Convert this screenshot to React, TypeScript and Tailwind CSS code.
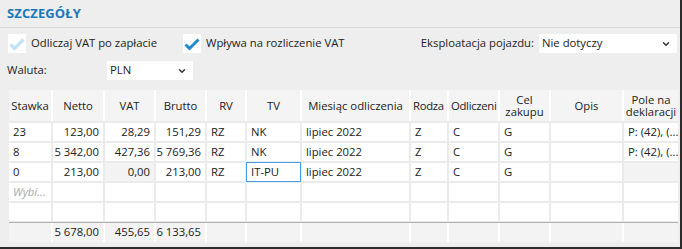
import { ChevronDown } from "lucide-react"

type Row = {
  stawka: string
  netto: string
  vat: string
  brutto: string
  rv: string
  tv: string
  miesiac: string
  rodzaj: string
  odl: string
  cel: string
  pole: string
}

const rows: Row[] = [
  { stawka: "23", netto: "123,00", vat: "28,29", brutto: "151,29", rv: "RZ", tv: "NK", miesiac: "lipiec 2022", rodzaj: "Z", odl: "C", cel: "G", pole: "P: (42), (..." },
  { stawka: "8", netto: "5 342,00", vat: "427,36", brutto: "5 769,36", rv: "RZ", tv: "NK", miesiac: "lipiec 2022", rodzaj: "Z", odl: "C", cel: "G", pole: "P: (42), (..." },
  { stawka: "0", netto: "213,00", vat: "0,00", brutto: "213,00", rv: "RZ", tv: "IT-PU", miesiac: "lipiec 2022", rodzaj: "Z", odl: "C", cel: "G", pole: "" },
]

const cols = "grid grid-cols-[42px_50px_49px_49px_38px_53px_107px_36px_49px_49px_71px_54px] gap-x-[2px]"

function CheckIcon({ faded }: { faded?: boolean }) {
  return (
    <svg width="16" height="14" viewBox="0 0 16 14">
      {faded ? (
        <path d="M1.5 7.5 L5.5 11.5 L14.5 2.5" fill="none" stroke="#c3e2f3" strokeWidth="3.2" strokeLinejoin="round" />
      ) : (
        <path d="M1.5 7.5 L5.5 11.5 L14.5 2.5" fill="none" stroke="#1e8ad6" strokeWidth="3" />
      )}
    </svg>
  )
}

function Select({ value, className }: { value: string; className: string }) {
  return (
    <div className={`h-[19px] bg-white flex items-center justify-between pl-[3px] pr-[6px] ${className}`}>
      <span>{value}</span>
      <ChevronDown size={10} strokeWidth={3.5} color="#333" />
    </div>
  )
}

function Cell({ children, align = "left", gray, focused }: { children?: React.ReactNode; align?: "left" | "right"; gray?: boolean; focused?: boolean }) {
  return (
    <div
      className={`h-[18px] flex items-center px-[4px] whitespace-nowrap overflow-hidden ${align === "right" ? "justify-end" : ""} ${gray ? "bg-[#f3f3f3]" : "bg-white"} ${focused ? "outline outline-1 outline-[#4b9be0]" : ""}`}
    >
      {children}
    </div>
  )
}

function App() {
  const headers = ["Stawka", "Netto", "VAT", "Brutto", "RV", "TV", "Miesiąc odliczenia", "Rodza", "Odliczeni", "Cel zakupu", "Opis", "Pole na deklaracji"]

  return (
    <div className="w-[682px] h-[249px] bg-[#eeeeee] border-r-2 border-b-2 border-[#2b2b2b] flex flex-col font-['Open_Sans',sans-serif] text-[11.3px] text-[#222] overflow-hidden">
      <div className="h-[28px] shrink-0 px-[7px] flex items-center border-b border-[#d8d8d8]">
        <h2 className="text-[13px] font-bold text-[#1b78b8] tracking-[0.1px]">SZCZEGÓŁY</h2>
      </div>

      {/* Options */}
      <div className="mt-[6px] h-[19px] flex items-center pl-[8px] pr-[3px]">
        <div className="w-[18px] h-[19px] bg-white flex items-center justify-center">
          <CheckIcon faded />
        </div>
        <span className="ml-[5px] w-[152px]">Odliczaj VAT po zapłacie</span>
        <div className="w-[18px] h-[19px] bg-white flex items-center justify-center">
          <CheckIcon />
        </div>
        <span className="ml-[5px]">Wpływa na rozliczenie VAT</span>
        <span className="ml-auto mr-[5px]">Eksploatacja pojazdu:</span>
        <Select value="Nie dotyczy" className="w-[138px]" />
      </div>

      <div className="mt-[8px] h-[19px] flex items-center pl-[7px]">
        <span className="w-[100px]">Waluta:</span>
        <Select value="PLN" className="w-[86px]" />
      </div>

      {/* Table */}
      <div className="mt-[10px] ml-[9px] w-[669px] flex flex-col">
        <div className={`${cols} bg-white`}>
          {headers.map((h, i) => (
            <div
              key={h}
              className={`h-[31px] bg-[#f4f4f4] flex items-center text-center leading-[12px] overflow-hidden ${i === 9 || i === 11 ? "whitespace-normal" : "whitespace-nowrap"} ${i === 7 || i === 8 ? "justify-start pl-[2px] tracking-[-0.3px]" : "justify-center"}`}
            >
              {h}
            </div>
          ))}
        </div>

        <div className={`${cols} gap-y-[2px] bg-[#ebebeb] pt-[2px]`}>
          {rows.map((r, i) => (
            <div key={i} className="contents">
              <Cell>{r.stawka}</Cell>
              <Cell align="right">{r.netto}</Cell>
              <Cell align="right" gray={i === 2}>{r.vat}</Cell>
              <Cell align="right">{r.brutto}</Cell>
              <Cell>{r.rv}</Cell>
              <Cell focused={i === 2}>{r.tv}</Cell>
              <Cell>{r.miesiac}</Cell>
              <Cell>{r.rodzaj}</Cell>
              <Cell>{r.odl}</Cell>
              <Cell>{r.cel}</Cell>
              <Cell />
              <Cell gray={i === 2}>{r.pole}</Cell>
            </div>
          ))}
          <Cell>
            <span className="italic text-[#a8a8a8]">Wybi...</span>
          </Cell>
          {Array.from({ length: 11 }).map((_, j) => (
            <Cell key={"a" + j} />
          ))}
          {Array.from({ length: 12 }).map((_, j) => (
            <Cell key={"b" + j} />
          ))}
        </div>

        <div className="h-[1px] bg-[#ebebeb]" />
        <div className="h-[1px] bg-[#b0b0b0]" />

        <div className={`${cols} bg-white`}>
          {["", "5 678,00", "455,65", "6 133,65", "", "", "", "", "", "", "", ""].map((v, i) => (
            <div key={i} className="h-[19px] bg-[#f3f3f3] flex items-center justify-end px-[4px] whitespace-nowrap">
              {v}
            </div>
          ))}
        </div>
      </div>
    </div>
  )
}

export default App
